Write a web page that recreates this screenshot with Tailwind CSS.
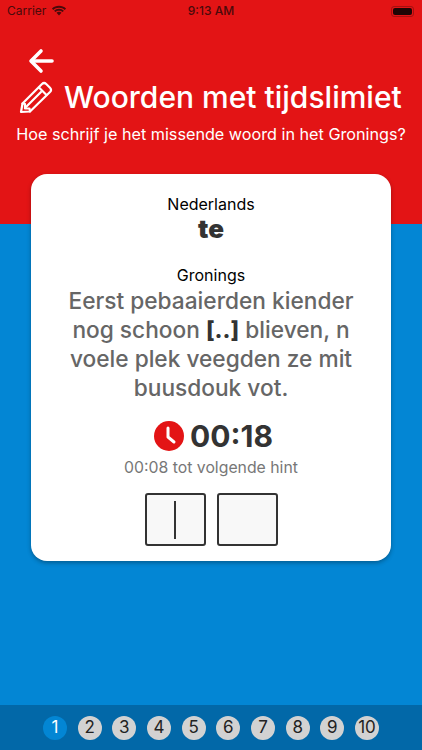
<!DOCTYPE html>
<html lang="nl">
<head>
  <meta charset="UTF-8" />
  <meta name="viewport" content="width=device-width, initial-scale=1.0" />
  <title>Woorden met tijdslimiet</title>
  <script src="https://cdn.jsdelivr.net/npm/@tailwindcss/browser@4"></script>
</head>
<body class="w-[422px] h-[750px] overflow-hidden flex flex-col bg-[#0386d4] font-[Inter,sans-serif]">
  <!-- Red header -->
  <header class="h-[224px] shrink-0 bg-[#e31415] text-white flex flex-col">
    <!-- Status bar -->
    <div class="h-[20px] mt-[1px] px-[7px] flex items-center justify-between text-[#4a0a0b] text-[12px]">
      <div class="flex items-center gap-[5px] w-[120px]">
        <span>Carrier</span>
        <svg class="w-[16px] h-[12px]" viewBox="0 0 15 11" fill="#4a0a0b">
          <path d="M7.5 2.400c2.100 0 4 .8 5.400 2.100l1.200-1.300C12.400 1.600 10 .6 7.500 .6S2.600 1.600 .9 3.200l1.200 1.300C3.500 3.200 5.400 2.400 7.500 2.400z" />
          <path d="M7.500 5.200c1.300 0 2.500.5 3.400 1.300l1.200-1.300C10.900 4.100 9.300 3.400 7.500 3.400S4.100 4.100 2.900 5.200l1.200 1.300C5 5.700 6.200 5.200 7.500 5.200z" />
          <path d="M7.500 6.300c-.9 0-1.700.3-2.300.9l2.300 2.500 2.300-2.500c-.6-.6-1.400-.9-2.300-.9z" />
        </svg>
      </div>
      <span class="font-medium">9:13 AM</span>
      <div class="w-[120px] flex justify-end pr-[1px]">
        <div class="w-[23px] h-[11px] rounded-[3px] border border-[#4a0a0b]/40 p-[1px]">
          <div class="w-full h-full rounded-[2px] bg-[#1f0505]"></div>
        </div>
      </div>
    </div>

    <svg class="w-[26px] h-[26px] ml-[28px] mt-[27px]" viewBox="0 0 26 26" fill="none" stroke="#fff" stroke-width="3.6" stroke-linecap="round" stroke-linejoin="round">
      <path d="M24 13H4" />
      <path d="M13 3 3 13l10 10" />
    </svg>

    <div class="flex items-center gap-[11px] ml-[19px] mt-[4px]">
      <svg class="w-[34px] h-[34px] shrink-0" viewBox="0 0 34 34" fill="none" stroke="#fff" stroke-width="2.2" stroke-linejoin="round" stroke-linecap="round">
        <path d="M2 32 3.500 23.500 23 4a3 3 0 0 1 4.200 0L31 7.800a3 3 0 0 1 0 4.200L11 31.500Z" />
        <path d="M20 7.500 27.500 15" />
        <path d="M3.500 23.500 6 24v4.500h4.500l.5 3" />
        <path d="M7 27 22 12" />
      </svg>
      <h1 class="text-[30px] leading-[38px] font-medium whitespace-nowrap">Woorden met tijdslimiet</h1>
    </div>

    <p class="text-[16.2px] leading-[22px] text-center mt-[7px] whitespace-nowrap">Hoe schrijf je het missende woord in het Gronings?</p>
  </header>

  <!-- Blue area with card -->
  <main class="flex-1 px-[31px]">
    <div class="-mt-[50px] h-[387px] bg-white rounded-[16px] shadow-[0_2px_4px_rgba(0,0,0,0.3)] flex flex-col items-center pt-[20px]">
      <p class="text-[16px] leading-[20px] text-black">Nederlands</p>
      <p class="text-[26px] leading-[28px] font-black text-[#333333] mt-[1px]">te</p>
      <p class="text-[16px] leading-[20px] text-black mt-[22px]">Gronings</p>
      <p class="text-[22.7px] leading-[29px] font-[450] text-[#666666] text-center mt-[1px] whitespace-nowrap">
        Eerst pebaaierden kiender<br />
        nog schoon <span class="font-extrabold text-[#333333]">[..]</span> blieven, n<br />
        voele plek veegden ze mit<br />
        buusdouk vot.
      </p>
      <div class="flex items-center gap-[6px] mt-[16px] ml-[5px]">
        <svg class="w-[30px] h-[30px]" viewBox="0 0 30 30">
          <circle cx="15" cy="15" r="15" fill="#e31415" />
          <path d="M14 7v9l6 5" fill="none" stroke="#fff" stroke-width="3" stroke-linecap="round" stroke-linejoin="round" />
        </svg>
        <span class="text-[30px] leading-[36px] font-bold text-[#333333]">00:18</span>
      </div>
      <p class="text-[15.8px] leading-[18px] text-[#777777] mt-[5px]">00:08 tot volgende hint</p>
      <div class="flex gap-[11px] mt-[16px]">
        <div class="w-[61px] h-[53px] bg-[#f8f8f8] border-2 border-[#333333] rounded-[3px] flex items-center justify-center">
          <div class="w-[2px] h-[38px] bg-[#333333]"></div>
        </div>
        <div class="w-[61px] h-[53px] bg-[#f8f8f8] border-2 border-[#333333] rounded-[3px]"></div>
      </div>
    </div>
  </main>

  <!-- Question nav -->
  <nav class="h-[45px] shrink-0 bg-[#0268a8] flex items-center justify-center gap-[10.67px] text-[17px] text-[#222222]">
    <span class="w-[24px] h-[24px] rounded-full bg-[#0386d4] text-white flex items-center justify-center">1</span>
    <span class="w-[24px] h-[24px] rounded-full bg-[#d2d2d2] flex items-center justify-center">2</span>
    <span class="w-[24px] h-[24px] rounded-full bg-[#d2d2d2] flex items-center justify-center">3</span>
    <span class="w-[24px] h-[24px] rounded-full bg-[#d2d2d2] flex items-center justify-center">4</span>
    <span class="w-[24px] h-[24px] rounded-full bg-[#d2d2d2] flex items-center justify-center">5</span>
    <span class="w-[24px] h-[24px] rounded-full bg-[#d2d2d2] flex items-center justify-center">6</span>
    <span class="w-[24px] h-[24px] rounded-full bg-[#d2d2d2] flex items-center justify-center">7</span>
    <span class="w-[24px] h-[24px] rounded-full bg-[#d2d2d2] flex items-center justify-center">8</span>
    <span class="w-[24px] h-[24px] rounded-full bg-[#d2d2d2] flex items-center justify-center">9</span>
    <span class="w-[24px] h-[24px] rounded-full bg-[#d2d2d2] flex items-center justify-center">10</span>
  </nav>
</body>
</html>
